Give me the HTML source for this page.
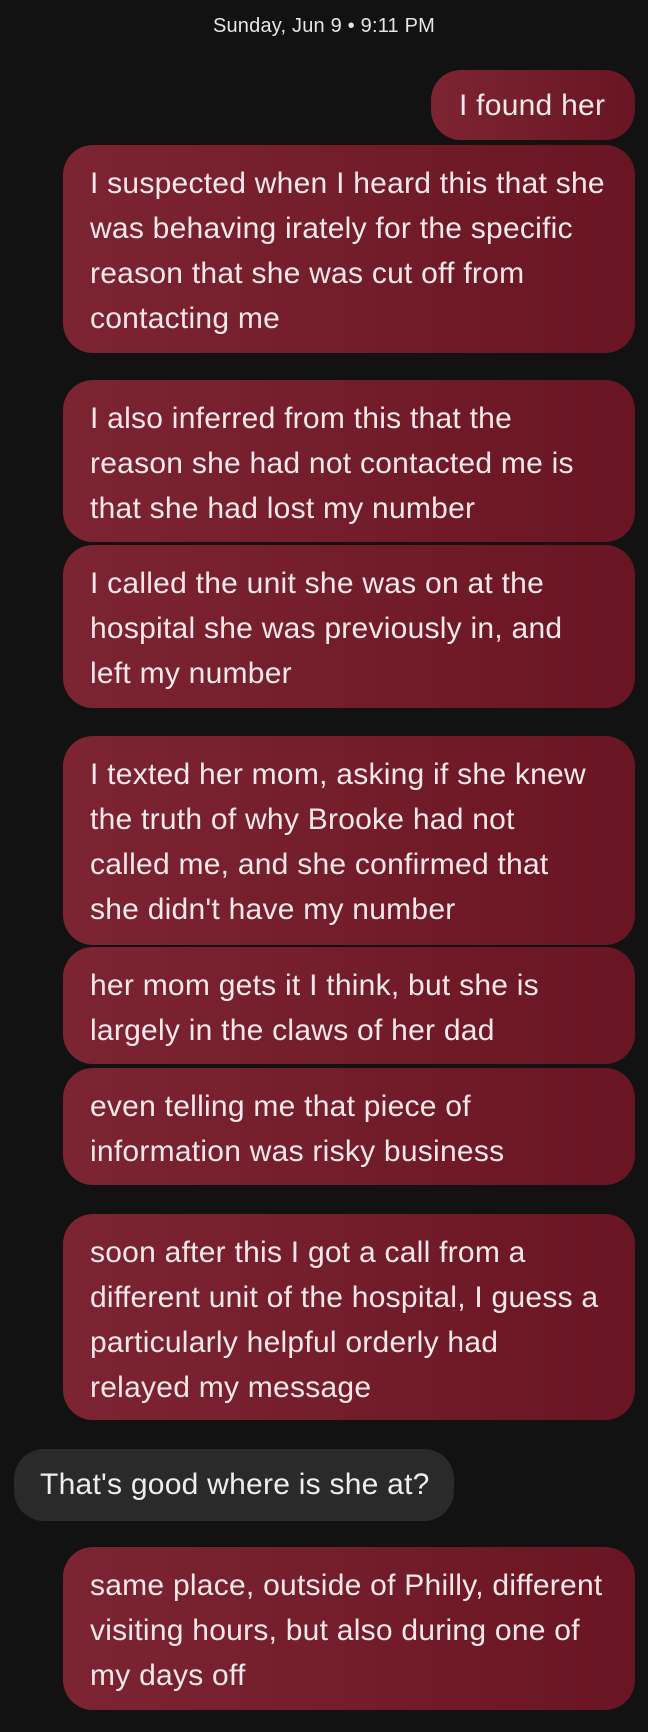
<!DOCTYPE html>
<html><head><meta charset="utf-8"><style>
html,body{margin:0;padding:0;background:#121212;}
body{width:648px;height:1732px;position:relative;overflow:hidden;font-family:"Liberation Sans",Arial,sans-serif;color:#f3e9ea;}
.d{position:absolute;top:15px;left:0;width:648px;text-align:center;font-size:20px;letter-spacing:0.2px;color:#e6e6e6;}
.b{position:absolute;left:63px;width:572px;box-sizing:border-box;padding:16px 10px 0 27px;border-radius:30px;background:linear-gradient(90deg,#7d2432,#6a1523);font-size:30px;letter-spacing:0.25px;line-height:45px;white-space:nowrap;}
.g{background:#2a2a2a;color:#eee;}
</style></head><body>
<div class="d">Sunday, Jun 9 • 9:11 PM</div>
<div class="b" style="left:431px;width:204px;top:70px;height:70px;padding-top:13px;padding-left:28px">I found her</div>
<div class="b" style="top:145px;height:208px">I suspected when I heard this that she<br>was behaving irately for the specific<br>reason that she was cut off from<br>contacting me</div>
<div class="b" style="top:380px;height:162px">I also inferred from this that the<br>reason she had not contacted me is<br>that she had lost my number</div>
<div class="b" style="top:545px;height:163px">I called the unit she was on at the<br>hospital she was previously in, and<br>left my number</div>
<div class="b" style="top:736px;height:209px">I texted her mom, asking if she knew<br>the truth of why Brooke had not<br>called me, and she confirmed that<br>she didn't have my number</div>
<div class="b" style="top:947px;height:117px">her mom gets it I think, but she is<br>largely in the claws of her dad</div>
<div class="b" style="top:1068px;height:117px">even telling me that piece of<br>information was risky business</div>
<div class="b" style="top:1214px;height:206px">soon after this I got a call from a<br>different unit of the hospital, I guess a<br>particularly helpful orderly had<br>relayed my message</div>
<div class="b g" style="left:14px;width:440px;top:1449px;height:72px;padding-top:13px;padding-left:26px">That's good where is she at?</div>
<div class="b" style="top:1547px;height:163px">same place, outside of Philly, different<br>visiting hours, but also during one of<br>my days off</div>
</body></html>
